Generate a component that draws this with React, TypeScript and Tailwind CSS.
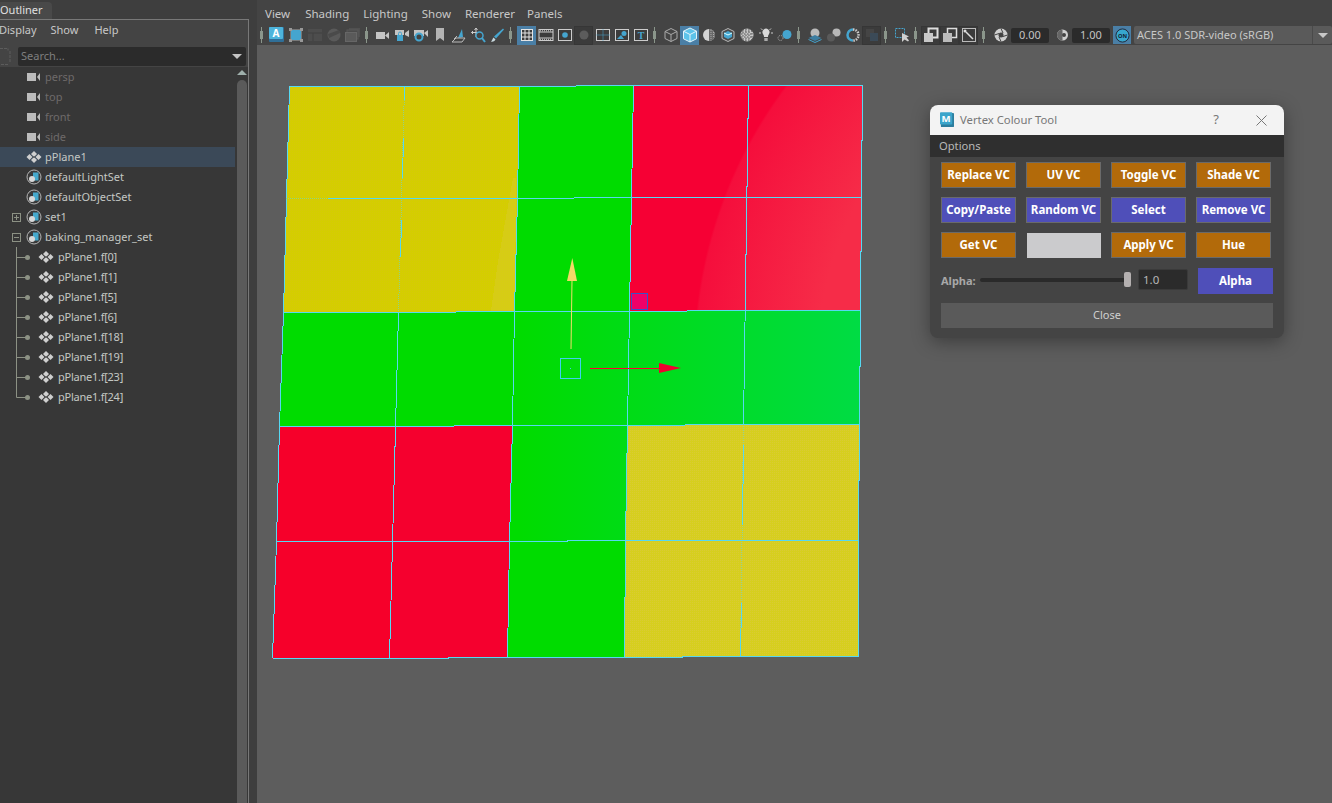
import type { ReactNode } from 'react';

const FONT = "font-['Noto_Sans',sans-serif]";

/* ---------- viewport mesh ---------- */

const xTop = [289.5, 404, 519, 633, 747.5, 861.5];
const xBot = [272.5, 389.5, 506.5, 623.5, 740, 857.5];
const yLeft = [86, 198, 312, 426, 541, 658];
const yRight = [85, 197, 310, 424, 540, 656];

function pt(i: number, j: number) {
  const y = yLeft[j] + ((yRight[j] - yLeft[j]) * i) / 5;
  const x = xTop[i] + ((xBot[i] - xTop[i]) * (y - 85.5)) / 572;
  return [Math.round(x) + 0.5, Math.round(y) + 0.5];
}

function xAt(i: number, y: number) {
  return Math.round(xTop[i] + ((xBot[i] - xTop[i]) * (y - 85.5)) / 572) + 0.5;
}

const cells = [
  ['url(#yellowA)', 'url(#yellowA)', '#00dc00', 'url(#redTop)', 'url(#redTop)'],
  ['url(#yellowA)', 'url(#yellowA)', '#00dc00', 'url(#redTop)', 'url(#redTop)'],
  ['url(#greenMid)', 'url(#greenMid)', 'url(#greenMid)', 'url(#greenMid)', 'url(#greenMid)'],
  ['#f6002a', '#f5002e', 'url(#greenMid)', 'url(#yellowB)', 'url(#yellowB)'],
  ['#f6002a', '#f5002e', '#00dc00', 'url(#yellowB)', 'url(#yellowB)'],
];

const WIRE = '#56d8f2';

function Mesh() {
  const idx = [0, 1, 2, 3, 4, 5];
  return (
    <svg viewBox="257 45 1075 758" className="block h-full w-full" shapeRendering="crispEdges">
      <defs>
        <pattern id="yellowA" width="2" height="2" patternUnits="userSpaceOnUse">
          <rect width="2" height="2" fill="#d4ce00" />
          <rect width="1" height="1" fill="#d6c80a" />
        </pattern>
        <pattern id="yellowB" width="2" height="2" patternUnits="userSpaceOnUse">
          <rect width="2" height="2" fill="#d6cf1e" />
          <rect width="1" height="1" fill="#dacb34" />
        </pattern>
        <radialGradient id="redTop" gradientUnits="userSpaceOnUse" cx="1150" cy="360" r="461">
          <stop offset="0.72" stopColor="#f62c48" />
          <stop offset="0.985" stopColor="#f50e3c" />
          <stop offset="0.99" stopColor="#f60034" />
          <stop offset="1" stopColor="#f60034" />
        </radialGradient>
        <linearGradient id="greenMid" gradientUnits="userSpaceOnUse" x1="520" y1="0" x2="860" y2="0">
          <stop offset="0" stopColor="#00dc00" />
          <stop offset="1" stopColor="#00dc44" />
        </linearGradient>
      </defs>

      {cells.map((row, j) =>
        row.map((fill, i) => {
          const points = [pt(i, j), pt(i + 1, j), pt(i + 1, j + 1), pt(i, j + 1)]
            .map((p) => p.join(','))
            .join(' ');
          return <polygon key={`${i}-${j}`} points={points} fill={fill} />;
        }),
      )}

      {/* paler sliver on the yellow face */}
      <polygon points="513,178 516,178 515,311 491,311 498,262" fill="#d9cb3a" fillOpacity="0.35" />

      {/* wire frame */}
      {idx.map((j) => (
        <polyline
          key={`h${j}`}
          points={idx.map((i) => pt(i, j).join(',')).join(' ')}
          fill="none"
          stroke={WIRE}
        />
      ))}
      {[0, 2, 3, 5].map((i) => (
        <polyline
          key={`v${i}`}
          points={idx.map((j) => pt(i, j).join(',')).join(' ')}
          fill="none"
          stroke={WIRE}
        />
      ))}
      {/* col 1 and col 4 fade out over the yellow faces */}
      <polyline points={`${pt(1, 2).join(',')} ${pt(1, 5).join(',')}`} fill="none" stroke={WIRE} />
      <polyline points={`${pt(1, 0).join(',')} ${pt(1, 2).join(',')}`} fill="none" stroke={WIRE} strokeOpacity="0.55" strokeDasharray="1 1" />
      <polyline points={`${pt(4, 0).join(',')} ${pt(4, 3).join(',')}`} fill="none" stroke={WIRE} />
      <polyline points={`${pt(4, 3).join(',')} ${pt(4, 5).join(',')}`} fill="none" stroke={WIRE} strokeOpacity="0.55" strokeDasharray="1 1" />
      {[[86, 100], [138, 178], [220, 257]].map(([a, b]) => (
        <line key={a} x1={xAt(1, a)} y1={a} x2={xAt(1, b)} y2={b} stroke={WIRE} />
      ))}
      {[[445, 525], [603, 656]].map(([a, b]) => (
        <line key={a} x1={xAt(4, a)} y1={a} x2={xAt(4, b)} y2={b} stroke={WIRE} />
      ))}

      {/* faint start of row 1 over the yellow */}
      <line x1="286" y1="198.5" x2="328" y2="198.5" stroke="#d4ce00" />
      <line x1="286" y1="198.5" x2="328" y2="198.5" stroke={WIRE} strokeOpacity="0.55" strokeDasharray="1 1" />

      {/* selected face marker */}
      <rect x="631.5" y="293.5" width="16" height="16" fill="#f00068" stroke="#3a52c4" />

      {/* move manipulator */}
      <g shapeRendering="auto">
        <line x1="571" y1="349" x2="572" y2="280" stroke="#f3dc6a" />
        <polygon points="572.3,258 577,281 567,281" fill="#f3d968" />
        <line x1="590" y1="368.5" x2="660" y2="368.5" stroke="#ff0030" strokeWidth="1" />
        <polygon points="659,363 659,373 681,368" fill="#f00030" />
      </g>
      <rect x="560.5" y="358.5" width="20" height="20" fill="none" stroke="#3fd0f0" />
      <rect x="570" y="368" width="1" height="1" fill="#3fd0f0" />
    </svg>
  );
}

/* ---------- toolbar ---------- */

const G = '#c4c4c4';
const B = '#45a5cf';
const D = '#5a5a5a';

function Sep({ className = '' }: { className?: string }) {
  return (
    <span className={`relative flex h-[16px] w-[8px] shrink-0 items-center justify-center ${className}`}>
      <span className="h-full w-px bg-[#8b968b]" />
      <span className="absolute h-[8px] w-[3px] bg-[#8b968b]" />
    </span>
  );
}

function Slot({ children, active, dark }: { children: ReactNode; active?: boolean; dark?: boolean }) {
  return (
    <span
      className={`flex h-[19px] w-[19px] shrink-0 items-center justify-center ${
        active ? 'bg-[#4a7fa6]' : dark ? 'border border-[#363636] bg-[#3b3b3b]' : ''
      }`}
    >
      <svg viewBox="0 0 16 16" className="h-4 w-4 shrink-0">
        {children}
      </svg>
    </span>
  );
}

const Cam = () => (
  <>
    <rect x="1" y="5" width="9" height="7" fill={G} />
    <polygon points="10,8.5 14,5 14,12" fill={G} />
  </>
);

function Toolbar() {
  return (
    <div className="flex h-[20px] items-center">
      <Sep className="mr-[2px]" />
      <Slot>
        <rect x="0" y="0" width="15" height="15" rx="1" fill="#2f6f98" />
        <rect x="0" y="0" width="14" height="12" rx="1" fill="#4db4dc" />
        <text x="7" y="10" textAnchor="middle" fontSize="10" fontWeight="700" fill="#fff" fontFamily="Noto Sans">A</text>
      </Slot>
      <Slot>
        <rect x="2.5" y="2.5" width="11" height="11" fill={B} stroke="#777" />
        <rect x="1" y="1" width="3" height="3" fill="#999" />
        <rect x="12" y="1" width="3" height="3" fill="#999" />
        <rect x="1" y="12" width="3" height="3" fill="#999" />
        <rect x="12" y="12" width="3" height="3" fill="#999" />
      </Slot>
      <Slot>
        <rect x="1" y="2" width="14" height="12" fill="#4d4d4d" />
        <path d="M1 6h14M6 6v8" stroke="#414141" />
      </Slot>
      <Slot>
        <circle cx="8" cy="8" r="6.5" fill={D} />
        <path d="M2 7l11-4 1 3-11 5z" fill="#4a4a4a" />
      </Slot>
      <Slot>
        <rect x="4" y="1" width="11" height="9" fill="#505050" />
        <rect x="2" y="3" width="11" height="9" fill="#4b4b4b" stroke="#585858" />
        <rect x="0.5" y="5.5" width="11" height="9" fill={D} stroke="#666" />
      </Slot>
      <Sep className="mr-[3px]" />
      <Slot><Cam /></Slot>
      <Slot>
        <rect x="1" y="3" width="9" height="5" fill={G} />
        <polygon points="11,6 15,3 15,10 11,8" fill={G} />
        <rect x="3" y="8" width="6" height="6" fill={B} />
        <path d="M4.5 8V6.5a1.5 1.5 0 013 0V8" stroke={B} fill="none" />
      </Slot>
      <Slot>
        <rect x="1" y="3" width="10" height="6" fill={G} />
        <polygon points="11,6 15,3 15,10" fill={G} />
        <circle cx="6" cy="10" r="3.5" fill="#444" stroke={B} strokeWidth="2" />
      </Slot>
      <Slot>
        <path d="M4 1h8v13l-4-3-4 3z" fill="#b4b4b4" />
      </Slot>
      <Slot>
        <path d="M7 11l4-9 1 8z" fill={B} />
        <path d="M1 15l4-4h9l-3 4z" fill="none" stroke="#bbb" />
        <path d="M3 12l3-3" stroke="#bbb" />
      </Slot>
      <Slot>
        <path d="M6 1v9M1.5 5.5h9M6 1L4.5 3M6 1l1.500 2M1.500 5.500L3 4M1.500 5.500L3 7" stroke="#ccc" fill="none" />
        <circle cx="9.500" cy="8.500" r="3.500" fill="#444" stroke={B} strokeWidth="1.500" />
        <path d="M12 11l3 4" stroke={B} strokeWidth="2" />
      </Slot>
      <Slot>
        <path d="M14 1.500l1 1-8 9-2-2z" fill={B} />
        <path d="M4.500 10.500l2 2c-1 2-3 2.500-4.500 2 1-1 1.500-2.500 2.500-4z" fill="#c8d8de" />
      </Slot>
      <Sep className="mr-[3px]" />
      <Slot active>
        <rect x="2.500" y="2.500" width="11" height="11" fill="#3c3c3c" stroke="#e4e4e4" />
        <path d="M6 2.500v11M10 2.500v11M2.500 6h11M2.500 10h11" stroke="#e4e4e4" />
      </Slot>
      <Slot>
        <rect x="1" y="2.500" width="14" height="11" fill="#3c3c3c" stroke="#ccc" />
        <path d="M1 5h14M1 11h14" stroke="#ccc" />
        <path d="M2 3.800h12M2 12.300h12" stroke="#ccc" strokeDasharray="1 1" />
      </Slot>
      <Slot>
        <rect x="1.500" y="2.500" width="13" height="11" fill="#3c3c3c" stroke="#ccc" />
        <circle cx="8" cy="8" r="2.800" fill={B} />
      </Slot>
      <Slot dark>
        <circle cx="8" cy="8" r="4.500" fill="#5c5c5c" />
      </Slot>
      <Slot>
        <rect x="1.500" y="2.500" width="13" height="11" fill="#3c3c3c" stroke="#ccc" />
        <path d="M1.500 8h13M8 2.500v11" stroke={B} strokeDasharray="1 1" />
      </Slot>
      <Slot>
        <rect x="1.500" y="2.500" width="13" height="11" fill="#3c3c3c" stroke="#ccc" />
        <circle cx="10" cy="6.500" r="2.500" fill={B} />
        <polygon points="3,12 7,8 10,12" fill={B} />
      </Slot>
      <Slot>
        <rect x="1.500" y="2.500" width="13" height="11" fill="#3c3c3c" stroke="#ccc" />
        <text x="8" y="12" textAnchor="middle" fontSize="10" fontWeight="700" fill={B} fontFamily="Liberation Serif">T</text>
      </Slot>
      <Sep className="mr-[3px]" />
      <Slot>
        <path d="M8 1.500l6 3v7l-6 3-6-3v-7zM2 4.500l6 3 6-3M8 7.500v7" fill="none" stroke="#aaa" />
      </Slot>
      <Slot active>
        <path d="M8 1l6.500 3.200v7.600L8 15l-6.500-3.200V4.200z" fill="#5cc3ea" />
        <path d="M1.500 4.200L8 7.500l6.500-3.300M8 7.500V15" fill="none" stroke="#e4f4fb" />
        <path d="M8 1l6.500 3.200v7.600L8 15l-6.500-3.200V4.200z" fill="none" stroke="#e4f4fb" />
      </Slot>
      <Slot>
        <circle cx="8" cy="8" r="6" fill="#d4d4d4" />
        <path d="M8 2a6 6 0 010 12z" fill="#6a6a6a" />
        <path d="M10 3v10M12.500 5v6" stroke="#aaa" strokeDasharray="1 1" />
      </Slot>
      <Slot>
        <path d="M8 1.500l6 3v7l-6 3-6-3v-7z" fill="#4a4a4a" stroke="#b8b8b8" />
        <path d="M8 4l4 2v4l-4 2-4-2V6z" fill={B} />
        <path d="M4 6l4 2 4-2" stroke="#dff" fill="none" />
      </Slot>
      <Slot>
        <circle cx="8" cy="8" r="6.500" fill="#c8c8c8" />
        <path d="M3 4h10M2 7h12M2 10h12M3 13h10M4 2v12M7 1.500v13M10 1.500v13M13 3v10" stroke="#555" strokeDasharray="1.500 1.500" />
      </Slot>
      <Slot>
        <path d="M5 7a3.500 3.500 0 116 0c-.5 1-1 1.500-1 3H6c0-1.500-.5-2-1-3z" fill="#d8d8d8" />
        <rect x="6.300" y="11" width="3.400" height="3" fill="#aaa" />
        <path d="M1 6h2M13 6h2M3 1.500l1.500 1.500M13 1.500L11.500 3" stroke="#ccc" />
      </Slot>
      <Slot>
        <circle cx="10" cy="7.500" r="4.500" fill={B} />
        <circle cx="3.500" cy="11" r="2.500" fill="none" stroke="#aaa" strokeDasharray="1 1" />
      </Slot>
      <Sep className="mr-[3px]" />
      <Slot>
        <circle cx="8" cy="6" r="4.500" fill="#bbb" />
        <path d="M1.500 11L8 8l6.500 3L8 14z" fill="#3d7da0" />
        <path d="M1.500 12.500L8 15.500l6.500-3" stroke={B} fill="none" />
      </Slot>
      <Slot>
        <circle cx="10.500" cy="5.500" r="4" fill="#b8b8b8" />
        <circle cx="5" cy="10.500" r="4" fill="#5a5a5a" />
      </Slot>
      <Slot>
        <path d="M8 2.500a5.500 5.500 0 000 11" fill="none" stroke={B} strokeWidth="2.500" />
        <path d="M8 2.500a5.500 5.500 0 010 11" fill="none" stroke="#ccc" strokeWidth="2.500" strokeDasharray="1.500 1" />
      </Slot>
      <Slot dark>
        <rect x="2" y="2" width="8" height="8" fill="#454545" />
        <rect x="6" y="6" width="8" height="8" fill="#3b4a57" />
      </Slot>
      <Sep className="mr-[3px]" />
      <Slot>
        <rect x="1.500" y="1.500" width="9" height="9" fill="none" stroke={B} strokeDasharray="2 1" />
        <path d="M8 6v9l2.500-2.500 3.500 2 1-1-2.500-3 2.500-1z" fill="#d0d0d0" />
      </Slot>
      <Sep className="mr-[2px]" />
      <Slot dark>
        <rect x="5.500" y="1.500" width="9" height="9" fill="none" stroke="#ddd" strokeWidth="2" />
        <rect x="1" y="6" width="9" height="9" fill="#c8c8c8" />
      </Slot>
      <Slot dark>
        <rect x="5.500" y="1.500" width="9" height="9" fill="none" stroke="#ddd" strokeWidth="1.500" />
        <rect x="1" y="6" width="9" height="9" fill="#bbb" />
      </Slot>
      <Slot dark>
        <rect x="1.500" y="1.500" width="13" height="13" fill="none" stroke="#bbb" />
        <circle cx="4" cy="4" r="1.500" fill="#ddd" />
        <path d="M5 5l7 7" stroke="#ddd" strokeWidth="1.500" />
      </Slot>
      <Sep className="ml-px mr-[4px]" />
      <Slot>
        <circle cx="8" cy="8" r="6.500" fill="#d0d0d0" />
        <circle cx="8" cy="8" r="2.500" fill="#444" />
        <path d="M8 1.500L10 6M14.500 8L10 9.500M8 14.500L6 10M1.500 8L6 6.500" stroke="#444" />
      </Slot>
      <span className={`${FONT} ml-px flex h-[15px] w-[38px] items-center justify-center rounded-[2px] bg-[#2b2b2b] text-[11px] text-[#c4c4c4]`}>
        0.00
      </span>
      <span className="ml-[3px] flex">
        <Slot>
          <circle cx="8.500" cy="8" r="5.500" fill="#d0d0d0" />
          <path d="M8.500 2.500a5.500 5.500 0 000 11z" fill="#666" />
          <circle cx="10" cy="8" r="2" fill="#444" />
        </Slot>
      </span>
      <span className={`${FONT} ml-px flex h-[15px] w-[38px] items-center justify-center rounded-[2px] bg-[#2b2b2b] text-[11px] text-[#c4c4c4]`}>
        1.00
      </span>
      <span className="ml-[3px] flex">
        <span className="flex h-[18px] w-[18px] items-center justify-center bg-[#4a7fa6]">
          <svg viewBox="0 0 16 16" className="h-[15px] w-[15px]">
            <circle cx="8" cy="8" r="7" fill="#37a8cf" stroke="#223" />
            <text x="8" y="10.500" textAnchor="middle" fontSize="6" fontWeight="700" fill="#123" fontFamily="Noto Sans">ON</text>
          </svg>
        </span>
      </span>
      <span className={`${FONT} ml-[3px] flex h-[18px] flex-1 items-center rounded-[2px] bg-[#5a5a5a] pl-[3px] text-[11px] text-[#c8c8c8]`}>
        <span className="flex-1">ACES 1.0 SDR-video (sRGB)</span>
        <span className="flex h-full w-5 items-center justify-center border-l border-[#4a4a4a]">
          <span className="h-0 w-0 border-x-[5px] border-t-[5px] border-x-transparent border-t-[#c8c8c8]" />
        </span>
      </span>
    </div>
  );
}

/* ---------- outliner ---------- */

const CameraIcon = () => (
  <svg viewBox="0 0 16 12" className="h-3 w-4 shrink-0">
    <rect x="1" y="2" width="9" height="8" fill="#bcbcbc" />
    <polygon points="11,6 14,2 14,10" fill="#bcbcbc" />
  </svg>
);

const MeshIcon = () => (
  <svg viewBox="0 0 16 12" className="h-3 w-4 shrink-0" fill="#cfcfcf">
    <polygon points="8,0 11,3 8,6 5,3" />
    <polygon points="8,6 11,9 8,12 5,9" />
    <polygon points="3.500,3 6.500,6 3.500,9 0.500,6" />
    <polygon points="12.500,3 15.500,6 12.500,9 9.500,6" />
    <rect x="7.200" y="5.200" width="1.600" height="1.600" fill="#555" />
  </svg>
);

const SetIcon = () => (
  <svg viewBox="0 0 16 16" className="h-4 w-4 shrink-0">
    <circle cx="8" cy="8" r="7" fill="#3a3a3a" stroke="#b4b4b4" />
    <rect x="7" y="3.500" width="5.500" height="8" fill="#46a9cc" />
    <circle cx="6" cy="10" r="3" fill="#d8d8d8" />
  </svg>
);

function Expander({ open }: { open?: boolean }) {
  return (
    <svg viewBox="0 0 9 9" className="ml-3 h-[9px] w-[9px]">
      <rect x="0.500" y="0.500" width="8" height="8" fill="none" stroke="#8c9184" />
      <path d={open ? 'M2 4.500h5' : 'M2 4.500h5M4.500 2v5'} stroke="#8c9184" />
    </svg>
  );
}

function Row({
  label,
  icon,
  dim,
  selected,
  expander,
}: {
  label: string;
  icon: ReactNode;
  dim?: boolean;
  selected?: boolean;
  expander?: ReactNode;
}) {
  return (
    <div className={`flex h-5 items-center ${selected ? 'bg-[#3b4958]' : ''}`}>
      <span className="flex w-[26px] shrink-0 items-center">{expander}</span>
      {icon}
      <span className={`ml-[3px] ${dim ? 'text-[#6e6a6a]' : 'text-[#c4c8c4]'}`}>{label}</span>
    </div>
  );
}

function ChildRow({ label, last }: { label: string; last?: boolean }) {
  return (
    <div className="flex h-5 items-center">
      <svg viewBox="0 0 38 20" className="h-5 w-[38px] shrink-0">
        <path d={last ? 'M16.500 0v10.500H27' : 'M16.500 0v20M16.500 10.500H27'} fill="none" stroke="#8c9184" />
        <circle cx="27.500" cy="10.500" r="2.500" fill="#8c9184" />
      </svg>
      <MeshIcon />
      <span className="ml-1 tracking-[-0.25px] text-[#c4c8c4]">{label}</span>
    </div>
  );
}

const faces = ['0', '1', '5', '6', '18', '19', '23', '24'];

function Outliner() {
  return (
    <aside className={`${FONT} flex h-full w-[257px] shrink-0 flex-col bg-[#3e3e3e] text-[11px]`}>
      <div className="flex h-[19px] shrink-0 items-end">
        <span className="flex h-[17px] w-[52px] items-center rounded-tr bg-[#494949] text-[11px] text-[#e0e0e0]">
          Outliner
        </span>
      </div>
      <div className="flex min-h-0 w-[249px] flex-1 flex-col border-r border-t border-[#787878] bg-[#444444]">
        <div className="flex h-[25px] shrink-0 items-center gap-[19px] pb-1 text-[#c8c8c8]">
          <span className="-ml-px">Display</span>
          <span className="-ml-[5px]">Show</span>
          <span className="-ml-[3px]">Help</span>
        </div>
        <div className="flex h-[22px] shrink-0 items-center pr-[2px]">
          <svg viewBox="0 0 11 17" className="h-[17px] w-[11px] shrink-0">
            <path d="M0 .500h8v2M10 3v11M8 16.500H0" fill="none" stroke="#5c5c5c" strokeDasharray="3 1" />
          </svg>
          <div className="ml-[7px] flex h-[19px] flex-1 items-center justify-between rounded-[2px] bg-[#2b2b2b] pl-[3px] pr-[4px] text-[#7f7f7f]">
            <span>Search...</span>
            <span className="h-0 w-0 border-x-[5px] border-t-[5px] border-x-transparent border-t-[#c4c4c4]" />
          </div>
        </div>
        <div className="flex min-h-0 flex-1 bg-[#373737]">
          <div className="w-[235px] shrink-0">
            <Row label="persp" icon={<CameraIcon />} dim />
            <Row label="top" icon={<CameraIcon />} dim />
            <Row label="front" icon={<CameraIcon />} dim />
            <Row label="side" icon={<CameraIcon />} dim />
            <Row label="pPlane1" icon={<MeshIcon />} selected />
            <Row label="defaultLightSet" icon={<SetIcon />} />
            <Row label="defaultObjectSet" icon={<SetIcon />} />
            <Row label="set1" icon={<SetIcon />} expander={<Expander />} />
            <Row label="baking_manager_set" icon={<SetIcon />} expander={<Expander open />} />
            {faces.map((f, n) => (
              <ChildRow key={f} label={`pPlane1.f[${f}]`} last={n === faces.length - 1} />
            ))}
          </div>
          <div className="flex w-[13px] flex-col items-center pl-[2px] pr-px pt-[3px]">
            <span className="h-0 w-0 border-x-[5px] border-b-[5px] border-x-transparent border-b-[#9fb0ac]" />
            <span className="mt-[5px] w-full flex-1 rounded-t-md bg-[#5a5a5a]" />
          </div>
        </div>
      </div>
    </aside>
  );
}

/* ---------- vertex colour tool ---------- */

const ORANGE = 'bg-[#b26a0a]';
const INDIGO = 'bg-[#4f4fb9]';

function ToolButton({ label, color }: { label: string; color: string }) {
  return (
    <button className={`h-[26px] w-[75px] border border-[#6a6a6a] text-[11.5px] font-bold text-white ${color}`}>
      {label}
    </button>
  );
}

function VertexTool() {
  return (
    <div className={`${FONT} absolute left-[673px] top-[60px] w-[354px] overflow-hidden rounded-lg bg-[#444444] pb-[10px] shadow-[0_4px_18px_rgba(0,0,0,0.35)]`}>
      <div className="flex h-[30px] items-center bg-[#f3f3f3] pl-[10px] text-[11.3px] text-[#777777]">
        <svg viewBox="0 0 16 18" className="h-[18px] w-[14px]">
          <rect x="1" y="1" width="15" height="16" rx="1" fill="#2d7e9e" />
          <rect x="0" y="0" width="14" height="14" rx="1" fill="#3ba5cb" />
          <text x="7" y="11" textAnchor="middle" fontSize="11" fontWeight="700" fill="#fff" fontFamily="Noto Sans">M</text>
        </svg>
        <span className="ml-[6px] flex-1">Vertex Colour Tool</span>
        <span className="mr-[37px] text-[13px]">?</span>
        <svg viewBox="0 0 11 11" className="mr-[17px] h-[11px] w-[11px]">
          <path d="M.500.500l10 10M10.500.500l-10 10" stroke="#777" fill="none" />
        </svg>
      </div>
      <div className="flex h-[22px] items-center bg-[#2f2f2f] pl-[9px] pt-px text-[11.2px] text-[#b8b8b8]">Options</div>
      <div className="grid grid-cols-[repeat(4,75px)] gap-x-[10px] gap-y-[9px] pl-[11px] pt-[5px]">
        <ToolButton label="Replace VC" color={ORANGE} />
        <ToolButton label="UV VC" color={ORANGE} />
        <ToolButton label="Toggle VC" color={ORANGE} />
        <ToolButton label="Shade VC" color={ORANGE} />
        <ToolButton label="Copy/Paste" color={INDIGO} />
        <ToolButton label="Random VC" color={INDIGO} />
        <ToolButton label="Select" color={INDIGO} />
        <ToolButton label="Remove VC" color={INDIGO} />
        <ToolButton label="Get VC" color={ORANGE} />
        <div className="ml-px mt-px h-[25px] w-[74px] bg-[#cbcbcd]" />
        <ToolButton label="Apply VC" color={ORANGE} />
        <ToolButton label="Hue" color={ORANGE} />
      </div>
      <div className="mt-[10px] flex items-center pl-[11px]">
        <span className="w-[39px] text-[11px] font-bold text-[#a8a8a8]">Alpha:</span>
        <div className="relative -mt-[3px] flex h-[16px] w-[151px] items-center">
          <span className="h-[4px] w-full rounded-full bg-[#2a2a2a]" />
          <span className="absolute right-0 h-[15px] w-[7px] rounded-[2px] bg-[#b4b0b0]" />
        </div>
        <span className="ml-[7px] -mt-[3px] flex h-[21px] w-[50px] items-center rounded-[2px] border border-[#3a3a3a] bg-[#2b2b2b] pl-1 text-[11.5px] text-[#b8b8b8]">
          1.0
        </span>
        <button className={`ml-[10px] h-[26px] w-[75px] text-[11.5px] font-bold text-white ${INDIGO}`}>Alpha</button>
      </div>
      <button className="ml-[11px] mt-[9px] block h-[25px] w-[332px] bg-[#5a5a5a] text-[11px] text-[#d0d0d0]">Close</button>
    </div>
  );
}

export default function App() {
  return (
    <div className="flex h-screen w-screen overflow-hidden bg-[#444444]">
      <Outliner />
      <main className="flex min-w-0 flex-1 flex-col">
        <div className={`${FONT} flex h-[25px] shrink-0 items-end gap-[14px] pb-[3px] pl-2 text-[11.5px] text-[#c8c8c8]`}>
          <span>View</span>
          <span className="ml-px">Shading</span>
          <span>Lighting</span>
          <span>Show</span>
          <span>Renderer</span>
          <span className="-ml-[2px]">Panels</span>
        </div>
        <Toolbar />
        <div className="relative min-h-0 flex-1 bg-[#5d5d5d]">
          <Mesh />
          <VertexTool />
        </div>
      </main>
    </div>
  );
}
